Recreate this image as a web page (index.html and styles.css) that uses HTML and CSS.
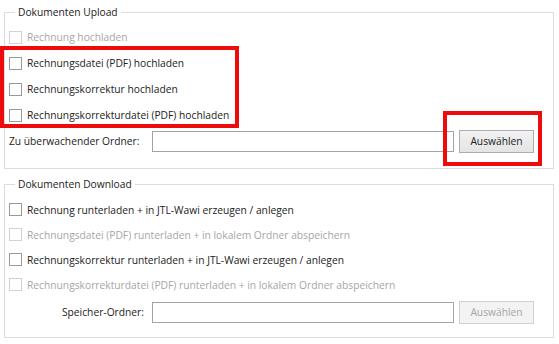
FILE: index.html
```html
<!DOCTYPE html>
<html lang="de">
<head>
  <meta charset="UTF-8" />
  <title>Dokumente</title>
  <link rel="stylesheet" href="styles.css">
</head>
<body>
  <fieldset class="group upload">
    <legend>Dokumenten Upload</legend>

    <label class="check disabled"><span class="box"></span>Rechnung hochladen</label>
    <label class="check"><span class="box"></span>Rechnungsdatei (PDF) hochladen</label>
    <label class="check"><span class="box"></span>Rechnungskorrektur hochladen</label>
    <label class="check"><span class="box"></span>Rechnungskorrekturdatei (PDF) hochladen</label>

    <div class="folder">
      <span class="folder-label">Zu überwachender Ordner:</span>
      <span class="field"></span>
      <span class="btn">Auswählen</span>
    </div>
  </fieldset>

  <fieldset class="group download">
    <legend>Dokumenten Download</legend>

    <label class="check"><span class="box"></span>Rechnung runterladen + in JTL-Wawi erzeugen / anlegen</label>
    <label class="check disabled"><span class="box"></span>Rechnungsdatei (PDF) runterladen + in lokalem Ordner abspeichern</label>
    <label class="check"><span class="box"></span>Rechnungskorrektur runterladen + in JTL-Wawi erzeugen / anlegen</label>
    <label class="check disabled"><span class="box"></span>Rechnungskorrekturdatei (PDF) runterladen + in lokalem Ordner abspeichern</label>

    <div class="folder">
      <span class="folder-label right">Speicher-Ordner:</span>
      <span class="field"></span>
      <span class="btn disabled">Auswählen</span>
    </div>
  </fieldset>

  <!-- annotation boxes drawn on top of the form -->
  <div class="mark mark-checks"></div>
  <div class="mark mark-button"></div>
</body>
</html>
```

FILE: styles.css
```css
body {
  font-family: 'Open Sans', 'DejaVu Sans', sans-serif;
  font-size: 10.25px;
  color: #222;
  margin: 0;
  padding: 5px 0 0 0;
  background-color: #fff;
  position: relative;
  width: 559px;
  height: 339px;
  overflow: hidden;
}

.group {
  width: 550px;
  box-sizing: border-box;
  margin: 0 0 0 4px;
  padding: 5px 4px 14px 4px;
  border: 1px solid #dcdcdc;
  display: flex;
  flex-direction: column;
}

.group legend {
  padding: 0 3px;
  margin-left: 6px;
  line-height: 14px;
  color: #222;
}

.download {
  margin-top: 8px;
  padding: 6px 4px 12px 4px;
}

.check {
  display: flex;
  align-items: center;
  height: 26px;
}

.download .check {
  height: 25px;
}

.box {
  width: 11px;
  height: 11px;
  border: 1px solid #9a9a9a;
  background-color: #fff;
  margin-right: 5px;
  flex-shrink: 0;
}

.check.disabled {
  color: #a6a6a6;
}

.check.disabled .box {
  border-color: #d2d2d2;
}

.folder {
  display: flex;
  align-items: center;
  height: 26px;
}

.download .folder {
  margin-top: 2px;
}

.folder-label {
  width: 143px;
}

.folder-label.right {
  width: 135px;
  padding-right: 8px;
  text-align: right;
}

.field {
  width: 300px;
  height: 19px;
  border: 1px solid #a3a3a3;
  background-color: #fff;
  margin-right: 5px;
}

.btn {
  width: 73px;
  height: 21px;
  border: 1px solid #adadad;
  background: linear-gradient(#f2f2f2, #e4e4e4);
  text-align: center;
  line-height: 21px;
  color: #222;
}

.btn.disabled {
  border-color: #d0d0d0;
  background: #f3f3f3;
  color: #a6a6a6;
}

.mark {
  position: absolute;
  border: 4px solid #ee0b0b;
  box-sizing: border-box;
}

.mark-checks {
  left: 0;
  top: 46px;
  width: 239px;
  height: 82px;
}

.mark-button {
  left: 443px;
  top: 111px;
  width: 99px;
  height: 55px;
}
```
